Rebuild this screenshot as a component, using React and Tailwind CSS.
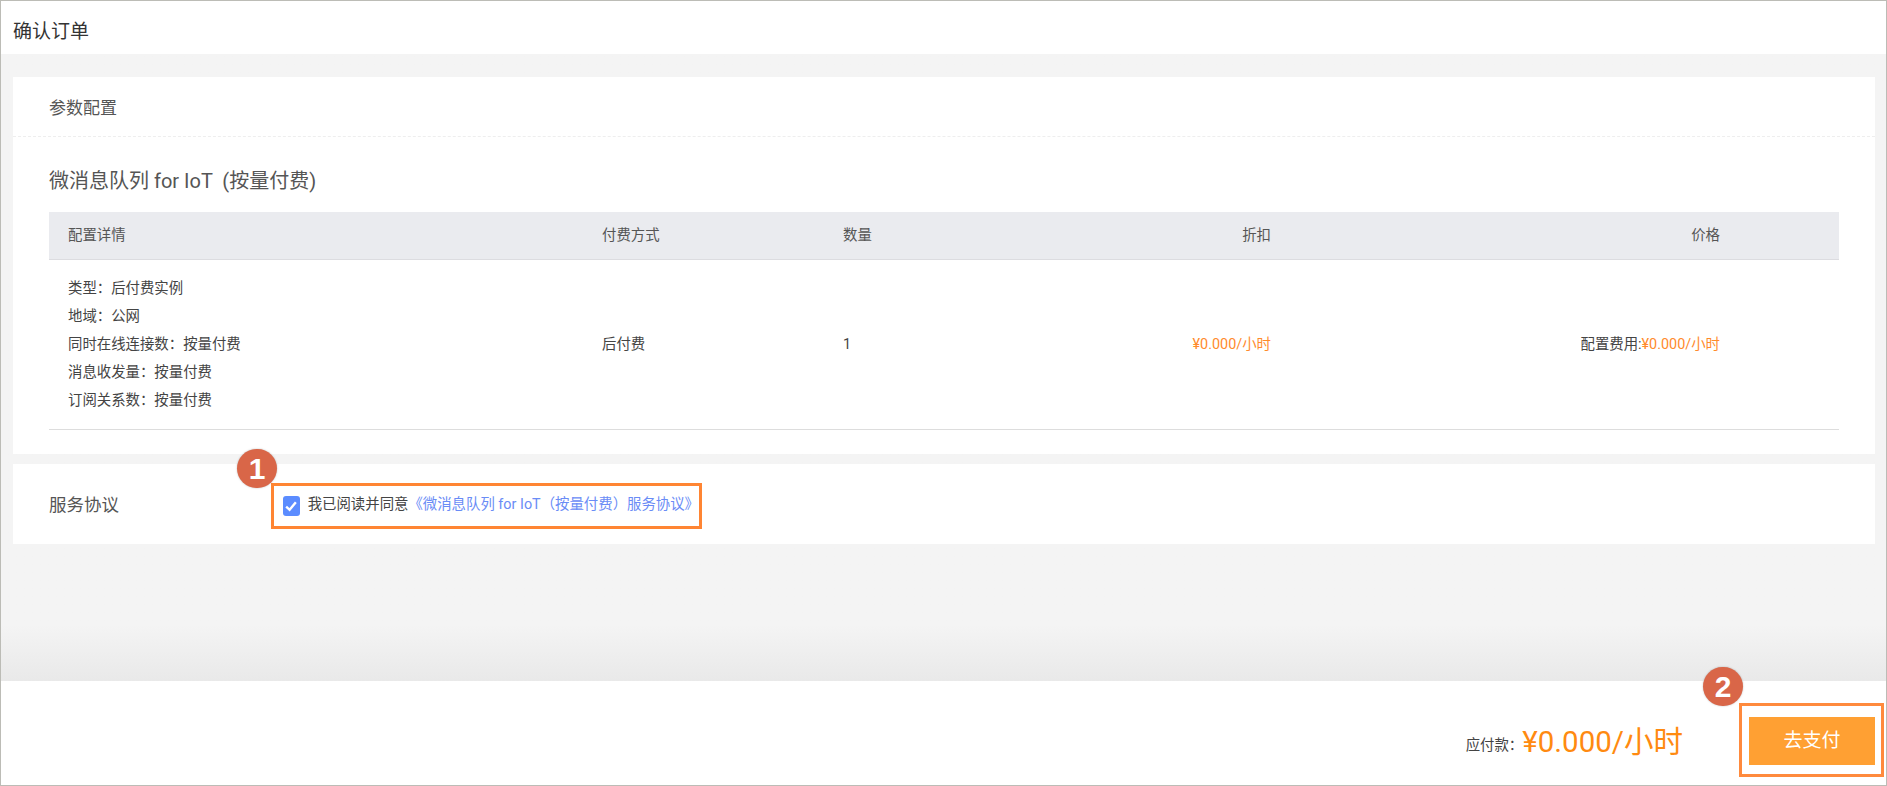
import React from "react";

const FONT = "font-['Roboto','Noto_Sans_CJK_SC',sans-serif]";

function Badge({ n, className }) {
  return (
    <div
      className={`absolute flex h-[39px] w-[40px] items-center justify-center rounded-full bg-[#d96648] text-[30px] font-bold text-white font-['Liberation_Sans',sans-serif] shadow-[0_0_2px_rgba(0,0,0,0.25)] ${className}`}
    >
      {n}
    </div>
  );
}

const detail = [
  "类型：后付费实例",
  "地域：公网",
  "同时在线连接数：按量付费",
  "消息收发量：按量付费",
  "订阅关系数：按量付费",
];

export default function App() {
  return (
    <div className={`flex h-[786px] flex-col border border-[#bcbcb6] bg-[#f4f4f4] text-[#333] ${FONT}`}>
      <div className="h-[53px] shrink-0 bg-white pl-3 text-[19px] leading-[62px] text-[#333]">确认订单</div>

      <div className="flex-1 bg-gradient-to-b from-[#f4f4f4] from-[91%] to-[#e9e9e9] pl-3 pr-[11px] pt-[23px]">
        <div className="h-[377px] bg-white">
          <div className="h-[60px] border-b border-dashed border-[#eee] pl-9 text-[17px] leading-[62px] text-[#555]">参数配置</div>
          <div className="px-9">
            <div className="h-[75px] pt-[24px] text-[20px] leading-[40px] text-[#555]">
              微消息队列 for IoT &nbsp;(按量付费)
            </div>
            <div className="grid h-[48px] grid-cols-[553px_241px_100px_328px_449px_1fr] items-center border-b border-[#dcdce0] bg-[#eaebef] text-[14.4px] text-[#555]">
              <div className="pl-[19px]">配置详情</div>
              <div>付费方式</div>
              <div>数量</div>
              <div className="text-right">折扣</div>
              <div className="text-right">价格</div>
            </div>
            <div className="grid h-[170px] grid-cols-[553px_241px_100px_328px_449px_1fr] items-center border-b border-[#ddd] text-[14.4px] text-[#444]">
              <div className="pl-[19px] leading-[28px]">
                {detail.map((d) => (
                  <div key={d}>{d}</div>
                ))}
              </div>
              <div>后付费</div>
              <div>1</div>
              <div className="whitespace-nowrap text-right text-[#ff8a2b]">¥0.000/小时</div>
              <div className="whitespace-nowrap text-right">
                配置费用:<span className="text-[#ff8a2b]">¥0.000/小时</span>
              </div>
            </div>
          </div>
        </div>

        <div className="mt-[10px] flex h-[80px] items-center bg-white pl-9">
          <div className="mt-[3px] w-[222px] text-[17.5px] text-[#555]">服务协议</div>
          <div className="relative mt-[4px] flex h-[46px] w-[431px] items-center border-[3px] border-[#ff8533] pl-[9px]">
            <Badge n="1" className="left-[-37px] top-[-37px]" />
            <span className="flex h-[20px] w-[20px] items-center justify-center rounded-[3px] bg-[#5b8cff]">
              <svg width="14" height="14" viewBox="0 0 13 13" fill="none" stroke="white" strokeWidth="2.2">
                <polyline points="2,7 5.2,10 11,3" />
              </svg>
            </span>
            <span className="ml-[8px] mt-[-3px] whitespace-nowrap text-[14.4px] text-[#444]">
              我已阅读并同意
              <span className="text-[#6a8cf6]">《微消息队列 for IoT（按量付费）服务协议》</span>
            </span>
          </div>
        </div>
      </div>

      <div className="flex h-[104px] shrink-0 justify-end bg-white pr-[2px] pt-[22px]">
        <div className="mr-[56px] mt-[13px] flex h-[52px] items-center whitespace-nowrap">
          <span className="mt-[8px] text-[14.4px] text-[#444]">应付款：</span>
          <span className="ml-[-1px] text-[29.5px] text-[#ff8a10]">¥0.000/小时</span>
        </div>
        <div className="relative h-[74px] w-[145px] border-[3px] border-[#ff8a3d] pl-[7px] pt-[11px]">
          <Badge n="2" className="left-[-39px] top-[-39px]" />
          <button className="h-[48px] w-[126px] bg-[#ffa033] text-[19px] text-white">去支付</button>
        </div>
      </div>
    </div>
  );
}
